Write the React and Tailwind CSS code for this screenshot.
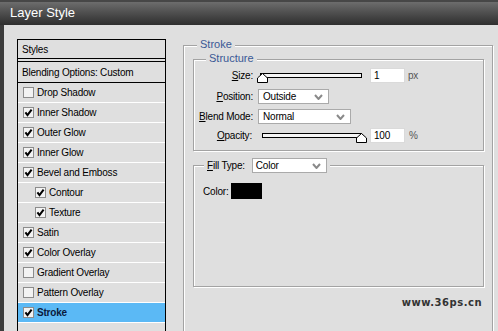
import React from "react";

function Check({ checked }) {
  return (
    <svg width="11" height="11" viewBox="0 0 11 11" className="shrink-0">
      <rect x="0.5" y="0.5" width="10" height="10" fill="#f3f3f3" stroke="#8c8c8c" />
      {checked && (
        <path d="M2.4 5.3 L4.5 8 L8.6 2.6" fill="none" stroke="#000" strokeWidth="2" />
      )}
    </svg>
  );
}

function Chevron() {
  return (
    <svg width="9" height="6" viewBox="0 0 9 6" className="shrink-0">
      <path d="M1 1 L4.5 5 L8 1" fill="none" stroke="#8a8a8a" strokeWidth="2" />
    </svg>
  );
}

function Thumb({ className }) {
  return (
    <svg width="11" height="10" viewBox="0 0 11 10" className={className}>
      <path d="M5.5 0.5 L10.5 5 L10.5 9.5 L0.5 9.5 L0.5 5 Z" fill="#fff" stroke="#000" />
    </svg>
  );
}

function Select({ className, value, pad }) {
  return (
    <div
      className={
        "h-[15px] bg-white border border-[#aaaaaa] flex items-center justify-between pr-[5px] " +
        className +
        " " +
        pad
      }
    >
      <span>{value}</span>
      <Chevron />
    </div>
  );
}

const rows = [
  { label: "Drop Shadow", checked: false },
  { label: "Inner Shadow", checked: true },
  { label: "Outer Glow", checked: true },
  { label: "Inner Glow", checked: true },
  { label: "Bevel and Emboss", checked: true },
  { label: "Contour", checked: true, sub: true },
  { label: "Texture", checked: true, sub: true },
  { label: "Satin", checked: true },
  { label: "Color Overlay", checked: true },
  { label: "Gradient Overlay", checked: false },
  { label: "Pattern Overlay", checked: false },
  { label: "Stroke", checked: true, selected: true },
];

export default function App() {
  return (
    <div className="w-[498px] h-[331px] overflow-hidden flex flex-col bg-[#dfdfdf] font-['Liberation_Sans',Arial,sans-serif] text-black">
      <div className="h-[25px] shrink-0 bg-linear-to-b from-[#6d6d6d] to-[#2f2f2f] border-t-2 border-[#474747] flex items-center pl-[10px] pb-[2px] text-white text-[13px]">
        Layer Style
      </div>
      <div className="flex flex-1 min-h-0">
        <div className="w-[4px] shrink-0 bg-[#3c3c3c]" />
        <div className="pl-[13px] pt-[14px] shrink-0">
          <div className="w-[149px] h-[400px] border border-black text-[10px] tracking-[-0.2px]">
            <div className="h-[19px] border-b border-black flex items-center pl-[4px]">Styles</div>
            <div className="h-[2px]" />
            <div className="border-t border-black">
              <div className="h-[21px] border-b border-black flex items-center pl-[4px]">
                Blending Options: Custom
              </div>
              {rows.map((r) => (
                <div
                  key={r.label}
                  className={
                    "h-[20px] border-b border-white flex items-center gap-[3px] " +
                    (r.sub ? "pl-[17px] " : "pl-[5px] ") +
                    (r.selected ? "bg-[#5bb9f5] font-bold text-[#0b1a3c]" : "")
                  }
                >
                  <Check checked={r.checked} />
                  <span>{r.label}</span>
                </div>
              ))}
              <div className="h-[20px]" />
            </div>
          </div>
        </div>
        <div className="relative ml-[17px] mt-[20px] w-[310px] h-[400px] shrink-0 border border-[#a3a3a3] shadow-[inset_1px_1px_0_#fff,1px_1px_0_#fff] pl-[9px] pr-[8px] pt-[13px] text-[10px] tracking-[-0.2px]">
          <span className="absolute -top-[8px] left-[13px] px-[3px] bg-[#dfdfdf] text-[11px] leading-[13px] tracking-normal text-[#3a5996]">
            Stroke
          </span>

          <div className="relative h-[92px] border border-[#a3a3a3] shadow-[inset_1px_1px_0_#fff,1px_1px_0_#fff] pt-[8px]">
            <span className="absolute -top-[8px] left-[12px] px-[3px] bg-[#dfdfdf] text-[11px] leading-[13px] tracking-normal text-[#3a5996]">
              Structure
            </span>

            <div className="flex items-center h-[15px]">
              <div className="w-[59px] text-right">
                <u>S</u>ize:
              </div>
              <div className="relative ml-[7px] w-[102px] h-[5px] border border-black bg-[#f4f4f4]">
                <Thumb className="absolute -left-[4px] -top-[1px]" />
              </div>
              <div className="ml-[8px] w-[35px] h-[15px] bg-white border border-[#dadada] pl-[3px] flex items-center">
                1
              </div>
              <span className="ml-[3px] text-[#555]">px</span>
            </div>

            <div className="flex items-center h-[15px] mt-[6px]">
              <div className="w-[59px] text-right">
                <u>P</u>osition:
              </div>
              <Select className="ml-[5px] w-[71px]" pad="pl-[4px]" value="Outside" />
            </div>

            <div className="flex items-center h-[15px] mt-[5px]">
              <div className="w-[59px] text-right">
                <u>B</u>lend Mode:
              </div>
              <Select className="ml-[5px] w-[93px]" pad="pl-[4px]" value="Normal" />
            </div>

            <div className="flex items-center h-[15px] mt-[4px]">
              <div className="w-[58px] text-right">
                <u>O</u>pacity:
              </div>
              <div className="relative ml-[10px] w-[100px] h-[5px] border border-black bg-[#f4f4f4]">
                <Thumb className="absolute -right-[6px] -top-[1px]" />
              </div>
              <div className="ml-[8px] w-[35px] h-[15px] bg-white border border-[#dadada] pl-[3px] flex items-center">
                100
              </div>
              <span className="ml-[4px] text-[#555]">%</span>
            </div>
          </div>

          <div className="relative mt-[14px] h-[122px] border border-[#a3a3a3] shadow-[inset_1px_1px_0_#fff,1px_1px_0_#fff] pt-[17px] pl-[9px]">
            <div className="absolute -top-[8px] left-[10px] px-[3px] bg-[#dfdfdf] h-[15px] flex items-center">
              <span>
                <u>F</u>ill Type:
              </span>
              <Select className="ml-[7px] w-[75px]" pad="pl-[3px]" value="Color" />
            </div>
            <div className="flex items-center h-[16px]">
              <span>Color:</span>
              <div className="ml-[3px] w-[31px] h-[16px] bg-black" />
            </div>
          </div>

          <div className="mt-[10px] flex justify-end pr-[2px]">
            <span className="font-['DejaVu_Sans',sans-serif] font-bold text-[10px] leading-[12px] tracking-[0.5px] text-[#333]">
              www.36ps.cn
            </span>
          </div>
        </div>
      </div>
    </div>
  );
}
